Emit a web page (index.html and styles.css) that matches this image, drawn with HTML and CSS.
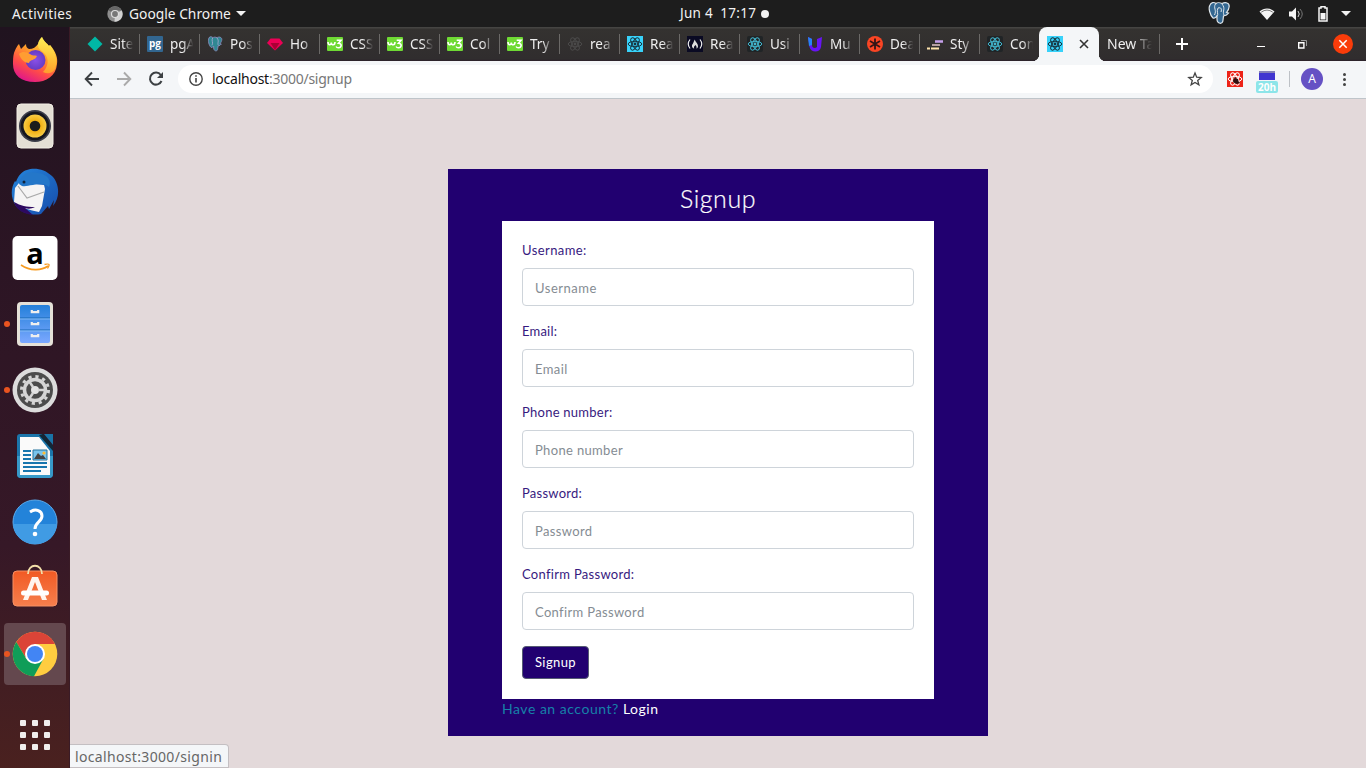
FILE: index.html
```html
<!DOCTYPE html>
<html lang="en">
<head>
<meta charset="utf-8">
<title>Signup</title>
<link rel="stylesheet" href="styles.css">
</head>
<body>
<svg class="defs" aria-hidden="true">
  <defs>
    <linearGradient id="fox" x1=".8" y1="0" x2=".3" y2="1"><stop offset="0" stop-color="#fff04a"/><stop offset=".4" stop-color="#ff9a2a"/><stop offset=".7" stop-color="#ff4c48"/><stop offset="1" stop-color="#df168b"/></linearGradient>
    <linearGradient id="foxTail" x1="0" y1="0" x2="0" y2="1"><stop offset="0" stop-color="#fff35a"/><stop offset="1" stop-color="#ffae28"/></linearGradient>
    <radialGradient id="globe"><stop offset="0" stop-color="#8a50e8"/><stop offset="1" stop-color="#663cc4"/></radialGradient>
    <radialGradient id="cone"><stop offset=".4" stop-color="#f0ac0c"/><stop offset="1" stop-color="#f6cb45"/></radialGradient>
    <linearGradient id="bird" x1="0" y1="0" x2="1" y2="1"><stop offset="0" stop-color="#2586dc"/><stop offset="1" stop-color="#164cab"/></linearGradient>
    <linearGradient id="drawer" x1="0" y1="0" x2="0" y2="1"><stop offset="0" stop-color="#2480da"/><stop offset="1" stop-color="#7ba8ff"/></linearGradient>
    <linearGradient id="orange" x1="0" y1="0" x2="0" y2="1"><stop offset="0" stop-color="#f15a24"/><stop offset="1" stop-color="#f67f4d"/></linearGradient>
    <symbol id="atom" viewBox="0 0 16 16"><g fill="none" stroke="currentColor" stroke-width="1"><ellipse cx="8" cy="8" rx="6.8" ry="2.7"/><ellipse cx="8" cy="8" rx="6.8" ry="2.7" transform="rotate(60 8 8)"/><ellipse cx="8" cy="8" rx="6.8" ry="2.7" transform="rotate(120 8 8)"/></g><circle cx="8" cy="8" r="1.4" fill="currentColor"/></symbol>
    <symbol id="w3" viewBox="0 0 16 16"><rect y="1" width="16" height="14" rx="1" fill="#6fda34"/><path d="M1 6c0 3.600 3.300 3.600 3.300.5 0 3 3.700 3.300 3.700-.5" fill="none" stroke="#fff" stroke-width="1.600"/><path d="M9.700 4.300h4.300l-2.500 3c3.800 0 3.300 4.500-.2 4.500-1.200 0-1.800-.5-2.200-1.300" fill="none" stroke="#fff" stroke-width="1.600"/></symbol>
    <symbol id="elephant" viewBox="0 0 24 24"><path d="M3 4C1 7 3 14 6 17c2 1 3-1 4-2v3c0 5 6 6 6 1l.5-4 3-1 2-2-2-.5C23 7 23 3 20 2c-2-1-4 0-5 .5-2-1-5-1-6 0C7 1 4 1 3 4z" fill="#336791" stroke="#dfe6eb" stroke-width="1.200"/><path d="M8.500 3C6 7 10 9 7.500 14M15 3c4 5 0 7 2 11M10 15c2-2-1-4 1-8 3-1 4 1 3 4" fill="none" stroke="#dfe6eb" stroke-width="1"/></symbol>
    <symbol id="elephant-tab" viewBox="0 0 24 24"><path d="M3 3C1 7 3 14 6 17c2 1 3-1 4-2v3c0 5 6 6 6 1l.5-4 3-1 2-2-2-.5C23 7 23 3 20 2c-2-1-4 0-5 .5-2-1-5-1-6 0C7 1 4 0 3 3z" fill="#2f8793" stroke="#8188b5" stroke-width="1.500"/><path d="M8.500 3C6 7 10 9 7.500 14M15 3c4 5 0 7 2 11" fill="none" stroke="#a3a9cf" stroke-width="1.300"/></symbol>
  </defs>
</svg>

<header class="panel">
  <span class="activities">Activities</span>
  <div class="app-menu">
    <svg width="16" height="16" viewBox="0 0 16 16"><circle cx="8" cy="8" r="7.700" fill="#8e8e8e"/><path d="M8 8 1.300 4.200A7.700 7.700 0 0 1 14.700 4.500H8z" fill="#666"/><path d="M8 8l6.700-3.500A7.700 7.700 0 0 1 7.500 15.700z" fill="#d2d2d2"/><circle cx="8" cy="8" r="3.500" fill="#777" stroke="#ddd" stroke-width="1.200"/></svg>
    <span>Google Chrome</span><i class="caret"></i>
  </div>
  <div class="clock"><span>Jun 4&nbsp; 17:17</span><i></i></div>
  <div class="tray">
    <svg class="tray-pg" width="24" height="24"><use href="#elephant"/></svg>
    <svg class="tray-wifi" width="16" height="14" viewBox="0 0 16 14"><path d="M.5 4.500C5 .5 11 .5 15.500 4.500L8 13z" fill="#f5f5f5"/><path d="M2.200 5.200Q8 .9 13.800 5.200" fill="none" stroke="#777" stroke-width="1"/></svg>
    <svg class="tray-vol" width="16" height="14" viewBox="0 0 16 14"><path d="M1 4.500h3l4-4v13l-4-4H1z" fill="#f5f5f5"/><path d="M10 4q2.500 3 0 6" fill="none" stroke="#ccc"/><path d="M12 2q4.500 5 0 10" fill="none" stroke="#777"/></svg>
    <svg class="tray-bat" width="10" height="16" viewBox="0 0 10 16"><path d="M3 2V.8h4V2h2v13H1V2z" fill="none" stroke="#f5f5f5" stroke-width="1.500"/><path d="M2.500 7h5v6.500h-5z" fill="#f5f5f5"/></svg>
    <i class="caret"></i>
  </div>
</header>

<div class="desktop">
  <nav class="dock">
    <div class="app"><svg viewBox="0 0 48 48"><path d="M3 17C5 12 6 10 8 8l2 5 5-5c0 3 1 4 3 5 4 0 7-2 9-5 1-3 2-5 4-7 2 5 5 6 7 9l1-1c6 7 8 13 7 19-1 12-11 18-22 18C10 46 2 39 2 28c0-4 0-7 1-11z" fill="url(#fox)"/><path d="M31 1c2 5 5 6 7 9l1-1c6 8 8 17 5 24-3 5-8 5-12 3 5-5 7-13 1-19-3-3-6-4-6-8 0-4 2-6 4-8z" fill="url(#foxTail)" opacity=".8"/><circle cx="24.500" cy="24" r="10" fill="url(#globe)"/><path d="M8 18c3-3 8-2 11 0 2 2 5 1 7 2-2 5-7 3-8 7-4 0-8-3-10-9z" fill="#ff9d32"/></svg></div>
    <div class="app"><svg viewBox="0 0 48 48"><rect x="6" y="2" width="36" height="44" rx="4" fill="#e4dfd5" stroke="#f3efe6"/><circle cx="24" cy="24" r="16" fill="#3a3c48"/><circle cx="24" cy="24" r="14.300" fill="#15161e"/><circle cx="24" cy="24" r="11.500" fill="url(#cone)"/><circle cx="24" cy="24" r="5.300" fill="#1c1c1c"/></svg></div>
    <div class="app"><svg viewBox="0 0 48 48"><path d="M16 2c7-3 18-1 25 6 8 8 8 22 1 30l1-6-5 9-1-3-7 8c-9 2-20-1-25-8C-1 29 0 20 4 13l1 1C7 8 11 3 16 2z" fill="url(#bird)"/><path d="M4 20l4-5 25 2 1 4-3 17-3 6C19 42 9 40 3 34z" fill="#f5f4f4"/><path d="M7 18l9 12 17-6" fill="none" stroke="#aaa" stroke-width="1.200"/><path d="M8 16C9 7 17 2 27 5c9 1 14 7 11 14-5-4-10-4-16-2-5 0-7 2-11 1z" fill="#2477c9"/><path d="M3 34c7 4 12 5 21 5-4 2-7 2-10 1l8 7C13 46 5 42 3 34z" fill="#2d0960"/><circle cx="13" cy="14" r="1.500" fill="#10243c"/></svg></div>
    <div class="app"><svg viewBox="0 0 48 48"><rect x="1.500" y="2" width="45" height="44" rx="5" fill="#fff"/><text x="24" y="30" text-anchor="middle" class="amazon-a">a</text><path d="M10 31c9 6 20 6 27 1" fill="none" stroke="#f79b20" stroke-width="1.600"/><path d="M33.500 30.500q4-1 4.500 0t-1.500 4" fill="none" stroke="#f79b20" stroke-width="1.300"/></svg></div>
    <div class="app running"><svg viewBox="0 0 48 48"><rect x="6" y="2" width="36" height="44" rx="4" fill="#e5e1d8"/><rect x="9" y="5" width="30" height="38" rx="2" fill="url(#drawer)"/><path d="M9 18h30M9 30h30" stroke="#1766b3"/><path d="M9 19h30M9 31h30" stroke="#85bcf5"/><g fill="none" stroke="#eee" stroke-width="2.200"><path d="M20.800 10v2.200h6.400V10M20.800 22v2.200h6.400V22M20.800 34v2.200h6.400V34"/></g></svg></div>
    <div class="app running"><svg viewBox="0 0 48 48"><circle cx="24" cy="24" r="22.500" fill="#dcdcdc"/><circle cx="24" cy="24" r="18" fill="#4c4c4c"/><circle cx="24" cy="24" r="13.500" fill="none" stroke="#d5d5d5" stroke-width="3" stroke-dasharray="3.200 3.868"/><circle cx="24" cy="24" r="10.500" fill="none" stroke="#d5d5d5" stroke-width="3.500"/><circle cx="24" cy="24" r="4" fill="#e3e3e3"/><path d="M27 24h7M22 21l-4-6M22 27l-4 6" stroke="#d5d5d5" stroke-width="2.500"/></svg></div>
    <div class="app"><svg viewBox="0 0 48 48"><path d="M9 2h22l11 13v27q0 4-4 4H10q-4 0-4-4V5q0-3 3-3z" fill="#1b75aa"/><path d="M6 24h36v18q0 4-4 4H10q-4 0-4-4z" fill="#3799c8"/><path d="M9 5h19l11 14v24H9z" fill="#fafafa"/><path d="M33 2h9v11z" fill="#1974a7"/><path d="M28 3l14 16v-5L32 2z" fill="#102837"/><path d="M12 19h8M12 23h8M12 27h8M12 31h24M12 35h24M12 39h18" stroke="#1876ae" stroke-width="2"/><path d="M22 18h14v10H22z" fill="#78c4ec" stroke="#26749e"/><path d="M23 27l4-6 3 3 2-1 3 4z" fill="#444"/><circle cx="33" cy="21" r="1.600" fill="#fb3"/></svg></div>
    <div class="app"><svg viewBox="0 0 48 48"><circle cx="24" cy="24" r="22" fill="#2383d9" stroke="#5babed"/><path d="M2 26h44c-1 13-10 20-22 20S3 38 2 26z" fill="#409be4"/><path d="M19 14c6-4 12-1 12 4 0 6-7 6-7 13" fill="none" stroke="#fff" stroke-width="3"/><circle cx="24" cy="36" r="2.300" fill="#fff"/></svg></div>
    <div class="app"><svg viewBox="0 0 48 48"><rect x="2" y="7" width="44" height="35" rx="4" fill="url(#orange)" stroke="#f69065"/><path d="M17 10c0-11 14-11 14 0" fill="none" stroke="#f2dfa9" stroke-width="1.800"/><path d="M21 13h6l9 23h-5l-7-18-7 18h-5z" fill="#fff4ed"/><rect x="10" y="26.500" width="28" height="5" rx="2.500" fill="#fff"/></svg></div>
    <div class="app running current"><svg viewBox="0 0 48 48"><circle cx="24" cy="24" r="22.300" fill="#ffcd40"/><path d="M24 14h19.900A22.300 22.300 0 0 0 5.300 12L15.500 29z" fill="#db4437"/><path d="M5.300 12A22.300 22.300 0 0 0 23 46.300l9.500-17.500L15.500 29z" fill="#0f9d58"/><circle cx="24" cy="24" r="10" fill="#fff"/><circle cx="24" cy="24" r="8" fill="#4285f4"/></svg></div>
    <div class="apps-grid"><i></i><i></i><i></i><i></i><i></i><i></i><i></i><i></i><i></i></div>
  </nav>

  <main class="browser">
    <div class="tabs">
      <div class="tab"><svg viewBox="0 0 16 16"><path d="M8 .5 15.500 8 8 15.500.5 8z" fill="#00b8a5"/></svg><span>Site</span></div>
      <div class="tab"><svg viewBox="0 0 16 16"><rect width="16" height="16" rx="1" fill="#326690"/><text x="8" y="11" text-anchor="middle" class="pg">pg</text></svg><span>pgA</span></div>
      <div class="tab"><svg viewBox="0 0 24 24"><use href="#elephant-tab"/></svg><span>Pos</span></div>
      <div class="tab"><svg viewBox="0 0 16 16"><path d="M3.500 2.500h9L16 7l-8 7.500L0 7z" fill="#ed0056"/><path d="M3.500 7h9L8 14z" fill="#aa0034"/></svg><span>Ho</span></div>
      <div class="tab"><svg><use href="#w3"/></svg><span>CSS</span></div>
      <div class="tab"><svg><use href="#w3"/></svg><span>CSS</span></div>
      <div class="tab"><svg><use href="#w3"/></svg><span>Col</span></div>
      <div class="tab"><svg><use href="#w3"/></svg><span>Try</span></div>
      <div class="tab"><svg class="atom-dim"><use href="#atom"/></svg><span>rea</span></div>
      <div class="tab"><svg class="atom-cyan"><use href="#atom"/></svg><span>Rea</span></div>
      <div class="tab"><svg viewBox="0 0 16 16"><path d="M0 0h16v16H0z" fill="#0a0a23"/><path d="M3 3.500Q-.5 8 3 12.500M13 3.500q3.500 4.500 0 9" fill="none" stroke="#eee" stroke-width="1.200"/><path d="M7.700 3.500c.7 2.500 3.300 4 3.300 6.500 0 1.500-.6 2.200-1.600 2.500.6-1.700-.2-2.300-.8-3.500-1 1-2.300 2-1.400 3.500C4.500 12 4.500 9 6 7.500z" fill="#ddd"/></svg><span>Rea</span></div>
      <div class="tab"><svg class="atom-dark"><use href="#atom"/></svg><span>Usi</span></div>
      <div class="tab"><svg viewBox="0 0 16 16"><path d="M1 1l4 2v6c0 3 3 4 5 2V3l5-2-1 10c-1 6-10 6-11.500 0z" fill="#6814f5"/><path d="M1 1l4 2v6l-3 1z" fill="#2584f4"/></svg><span>Mu</span></div>
      <div class="tab"><svg viewBox="0 0 16 16"><circle cx="8" cy="8" r="8" fill="#fa4524"/><path d="M8 2.500v11M3 5l10 6M3 11l10-6" stroke="#301517" stroke-width="1.800"/></svg><span>Dea</span></div>
      <div class="tab"><svg viewBox="0 0 16 16"><path d="M8 5.500h8" stroke="#c6a1ec" stroke-width="2.500"/><path d="M5 9h8" stroke="#b6a0a2" stroke-width="2"/><path d="M0 12.500h3M4 12.500h8" stroke="#ffe5ad" stroke-width="2.200"/></svg><span>Sty</span></div>
      <div class="tab"><svg class="atom-dark"><use href="#atom"/></svg><span>Con</span></div>
      <div class="tab active"><svg class="atom-cyan"><use href="#atom"/></svg><svg class="close" viewBox="0 0 16 16"><path d="M4 4l8 8M12 4l-8 8" stroke="#333" stroke-width="1.600"/></svg></div>
      <div class="tab last"><span>New Ta</span></div>
      <svg class="plus" viewBox="0 0 12 12"><path d="M6 0v12M0 6h12" stroke="#fff" stroke-width="2"/></svg>
      <div class="window-buttons">
        <svg width="8" height="8"><path d="M0 6.500h8" stroke="#fff"/></svg>
        <svg width="9" height="9" viewBox="0 0 9 9"><path d="M3 .5h5.500V6" fill="none" stroke="#999"/><path d="M.7 2.700h5.200V8H.7z" fill="none" stroke="#fff" stroke-width="1.400"/></svg>
        <svg width="20" height="20" viewBox="0 0 20 20"><circle cx="10" cy="10" r="10" fill="#fa3c0a"/><path d="M6.300 6.300l7.400 7.400m0-7.400l-7.400 7.400" stroke="#fff" stroke-width="1.500"/></svg>
      </div>
    </div>

    <div class="toolbar">
      <svg class="nav" viewBox="0 0 16 16"><path d="M15 8H2M8 1.500 1.700 8 8 14.500" fill="none" stroke="#3c4043" stroke-width="1.900"/></svg>
      <svg class="nav" viewBox="0 0 16 16"><path d="M1 8h13M8 1.500 14.300 8 8 14.500" fill="none" stroke="#aaa" stroke-width="1.900"/></svg>
      <svg class="nav" viewBox="0 0 16 16"><path d="M13.500 10A6 6 0 1 1 12.800 4" fill="none" stroke="#3c4043" stroke-width="2"/><path d="M15 1v6H9z" fill="#3c4043"/></svg>
      <div class="address">
        <svg width="14" height="14" viewBox="0 0 14 14"><circle cx="7" cy="7" r="6.200" fill="none" stroke="#444" stroke-width="1.400"/><path d="M7 6v4.500M7 3.200v1.600" stroke="#444" stroke-width="1.600"/></svg>
        <span class="url">localhost<em>:3000/signup</em></span>
        <svg class="star" width="16" height="16" viewBox="0 0 16 16"><path d="M8 2l1.700 4.200 4.500.3-3.500 2.900 1.200 4.400L8 11.400l-3.900 2.400 1.200-4.400L1.800 6.500l4.500-.3z" fill="none" stroke="#444" stroke-width="1.300"/></svg>
      </div>
      <svg class="ext" width="16" height="16" viewBox="0 0 16 16"><path d="M0 0h16v16H0z" fill="#ed2318"/><g color="#fff"><use href="#atom"/></g><path d="M7 7l4 1 1 4-3 1-3-2z" fill="#301010"/><path d="M6 9l7 3M8 6l3 7" stroke="#301010"/></svg>
      <div class="timer"><i></i><span>20h</span></div>
      <div class="rule"></div>
      <div class="avatar">A</div>
      <div class="menu"><i></i><i></i><i></i></div>
    </div>

    <section class="page">
      <div class="signup">
        <h1>Signup</h1>
        <form>
          <label class="w-user">Username:</label><input class="p-user" placeholder="Username">
          <label class="w-email">Email:</label><input class="p-email" placeholder="Email">
          <label class="w-phone">Phone number:</label><input class="p-phone" placeholder="Phone number">
          <label class="w-pass">Password:</label><input class="p-pass" placeholder="Password">
          <label class="w-confirm">Confirm Password:</label><input class="p-confirm" placeholder="Confirm Password">
          <button type="button">Signup</button>
        </form>
        <p><span>Have an account?</span> <a>Login</a></p>
      </div>
      <div class="status">localhost:3000/signin</div>
    </section>
  </main>
</div>
</body>
</html>
```
FILE: styles.css
```css
* { box-sizing: border-box; }
body { margin: 0; width: 1366px; height: 768px; overflow: hidden; font-family: "Noto Sans", "Open Sans", sans-serif; font-size: 14px; }
svg { display: block; flex: none; }
.defs { position: absolute; width: 0; height: 0; }

.panel { height: 27px; display: grid; grid-template-columns: 107px 573px 500px 1fr; align-items: center; background: #1d1d1d; color: #f2f2f2; font-size: 14px; }
.activities { padding-left: 12px; letter-spacing: .4px; }
.app-menu { display: flex; align-items: center; gap: 6px; letter-spacing: 0; white-space: nowrap; }
.caret { width: 0; height: 0; border: 5px solid transparent; border-top-color: #f2f2f2; border-bottom: 0; }
.app-menu .caret { margin-left: -1px; }
.clock { display: flex; align-items: center; gap: 5px; padding-bottom: 1px; font-size: 13.500px; letter-spacing: .25px; white-space: nowrap; }
.clock i { width: 8px; height: 8px; margin-top: 1px; border-radius: 50%; background: #f2f2f2; }
.activities, .clock span { font-size: 13.500px; }
.tray { display: flex; align-items: center; padding-left: 27px; }
.tray-pg { margin-top: -2px; }
.tray-wifi { margin-left: 28px; }
.tray-vol { margin-left: 13px; }
.tray-bat { margin-left: 14px; }
.tray .caret { margin-left: 13px; }
.app-menu span { font-size: 13.800px; }

.desktop { display: flex; height: 741px; }
.dock { width: 70px; background: linear-gradient(#20131f, #2c1524 33%, #361827 70%, #4a211f); border-right: 1px solid #3a1b26; }
.app { position: relative; width: 70px; height: 66px; display: grid; place-items: center; }
.app svg { width: 48px; height: 48px; z-index: 1; }
.running::before { content: ""; position: absolute; left: 4px; top: 30px; width: 6px; height: 6px; border-radius: 50%; background: #e95420; z-index: 1; }
.current::after { content: ""; position: absolute; left: 4px; top: 2px; width: 62px; height: 62px; border-radius: 4px; background: #64484e; }
.amazon-a { font: bold 29px "Open Sans", sans-serif; }
.apps-grid { display: grid; grid-template-columns: repeat(3, 6px); gap: 6px; padding: 33px 20px; }
.apps-grid i { height: 6px; border-radius: 1px; background: #f0eeed; }

.browser { width: 1296px; display: flex; flex-direction: column; }
.tabs { height: 34px; display: flex; align-items: center; padding-left: 9px; background: linear-gradient(#454442 0 1px, #343230 2px, #302d2e 32px, #2b2029); color: #eee; }
.tab { position: relative; width: 60px; height: 34px; flex: none; display: flex; align-items: center; gap: 7px; padding-left: 8px; }
.tab:not(.active)::after { content: ""; position: absolute; right: -1px; top: 7px; width: 1px; height: 20px; background: #6b6967; }
.tab:has(+ .active)::after { display: none; }
.tab svg { width: 16px; height: 16px; }
.tab span { width: 26px; padding-bottom: 1px; overflow: hidden; white-space: nowrap; font-size: 13.500px; mask-image: linear-gradient(90deg, #000 48%, transparent 90%); }
.tab .atom-dim { color: #4b4a4a; }
.tab .atom-cyan { color: #17323c; background: #38d2fa; }
.tab .atom-dark { color: #42b8d0; background: #202426; border-radius: 2px; }
.pg { font: bold 10px "Open Sans", sans-serif; fill: #fff; }
.active { background: #f4f6f8; border-radius: 8px 8px 0 0; }
.active::before { content: ""; position: absolute; left: -7px; right: -7px; bottom: 0; height: 7px; background: radial-gradient(circle at 0 0, transparent 7px, #f4f6f8 7.500px) 0 0 / 7px 7px no-repeat, radial-gradient(circle at 100% 0, transparent 7px, #f4f6f8 7.500px) 100% 0 / 7px 7px no-repeat; }
.active .close { margin-left: 6px; }
.last { padding-left: 8px; }
.tab.last span { width: 48px; font-size: 14px; mask-image: linear-gradient(90deg, #000 55%, transparent 94%); }
.plus { width: 12px; height: 12px; margin-left: 17px; }
.window-buttons { margin-left: auto; padding-right: 13px; display: flex; align-items: center; }
.window-buttons svg:nth-child(2) { margin-left: 33px; }
.window-buttons svg:nth-child(3) { margin-left: 26px; }

.toolbar { height: 38px; flex: none; display: flex; align-items: center; padding: 0 0 1px 14px; background: #f4f6f8; border-bottom: 1px solid #bfc5ca; }
.nav { width: 16px; height: 16px; margin-right: 16px; }
.address { width: 1035px; height: 28px; margin-left: -2px; display: flex; align-items: center; padding: 0 10px 0 11px; border-radius: 14px; background: #fff; }
.url { margin-left: 9px; padding-bottom: 2px; color: #111; font-size: 14px; letter-spacing: -.25px; }
.url em { font-style: normal; color: #777; }
.star { margin-left: auto; }
.ext { margin-left: 14px; }
.timer { width: 22px; margin-left: 13px; display: flex; flex-direction: column; align-items: center; gap: 1px; padding-top: 5px; }
.timer i { width: 16px; height: 9px; border-top: 2px solid #8480b7; background: #4035d0; }
.timer span { width: 22px; height: 12px; border-radius: 2px; background: #8ce5e9; color: #fff; font: bold 10px/12px "Open Sans", sans-serif; text-align: center; }
.rule { width: 1px; height: 16px; margin-left: 11px; background: #bdc1c6; }
.avatar { width: 22px; height: 22px; margin-left: 11px; border-radius: 50%; background: #6551c4; color: #fff; font-size: 12px; line-height: 22px; text-align: center; }
.menu { margin-left: 20px; display: grid; gap: 2px; }
.menu i { width: 3px; height: 3px; border-radius: 50%; background: #444; }

.page { position: relative; flex: 1; padding-top: 70px; background: #e3d9da; }
.signup { width: 540px; height: 567px; margin: 0 auto; padding: 0 54px; background: #210070; font-family: Lato, sans-serif; }
.signup h1 { height: 52px; margin: 0; padding-top: 7px; color: #fff; font-size: 25px; font-weight: 300; line-height: 44px; text-align: center; letter-spacing: .55px; -webkit-text-stroke: .2px #fff; }
form { height: 478px; padding: 20px; background: #fff; }
label { display: block; height: 27px; line-height: 19px; color: #371a80; font-size: 13px; }
input { display: block; width: 392px; height: 38px; margin: 0 0 16px; padding: 1px 12px 0; border: 1px solid #ced4da; border-radius: 4px; background: #fff; font: 13px Lato, sans-serif; }
input::placeholder { color: #858c93; opacity: 1; }
button { display: block; width: 67px; height: 33px; padding: 0 0 1px; border: 1px solid #555b73; border-radius: 4px; background: #210070; color: #fff; font: 13px Lato, sans-serif; letter-spacing: .4px; }
.signup p { margin: -1px 0 0; color: #fff; font-size: 14px; line-height: 21px; letter-spacing: .52px; }
.signup p span { color: #1681a8; }
.w-user { letter-spacing: .42px; }
.p-user { letter-spacing: .52px; }
.w-email { letter-spacing: .2px; }
.p-email { letter-spacing: .4px; }
.w-phone { letter-spacing: .25px; }
.p-phone { letter-spacing: .34px; }
.w-pass { letter-spacing: .25px; }
.p-pass { letter-spacing: .36px; }
.w-confirm { letter-spacing: .3px; }
.p-confirm { letter-spacing: .34px; }
.status { position: absolute; left: 0; bottom: 0; width: 159px; height: 24px; padding-left: 5px; border: 1px solid #c4bfc2; border-left: 0; border-radius: 0 4px 0 0; background: #f4f6f8; color: #666; line-height: 24px; letter-spacing: .34px; white-space: nowrap; }
```
